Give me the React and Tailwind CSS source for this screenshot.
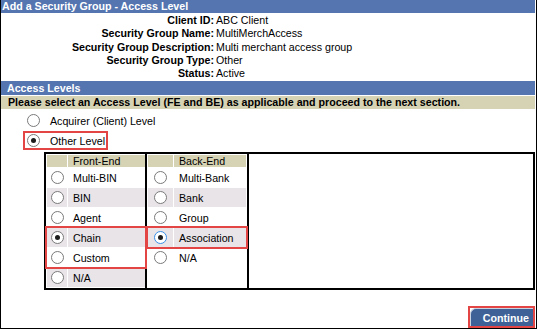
import React from 'react';

const info = [
  ['Client ID:', 'ABC Client'],
  ['Security Group Name:', 'MultiMerchAccess'],
  ['Security Group Description:', 'Multi merchant access group'],
  ['Security Group Type:', 'Other'],
  ['Status:', 'Active'],
];

const frontEnd = [
  { label: 'Multi-BIN' },
  { label: 'BIN' },
  { label: 'Agent' },
  { label: 'Chain', checked: true, group: 'a' },
  { label: 'Custom', group: 'a' },
  { label: 'N/A' },
];

const backEnd = [
  { label: 'Multi-Bank' },
  { label: 'Bank' },
  { label: 'Group' },
  { label: 'Association', checked: true, focus: true, group: 'b' },
  { label: 'N/A' },
];

const Radio = ({ checked, focus }) => (
  <span
    className={`flex h-[13px] w-[13px] items-center justify-center rounded-full border bg-white ${
      focus ? 'border-[#3a8ee6]' : 'border-[#7a7a7a]'
    }`}
  >
    {checked && <span className="h-[5px] w-[5px] rounded-full bg-[#1c1c1c]" />}
  </span>
);

const Row = ({ item, index, radioWidth }) => {
  const bg = index % 2 === 1 ? 'bg-[#e8e4e8]' : 'bg-white';
  return (
    <div className="flex h-[19px] gap-[1px]">
      <div className={`flex items-center justify-center ${radioWidth} ${bg}`}>
        <Radio checked={item.checked} focus={item.focus} />
      </div>
      <div className={`flex flex-1 items-center pl-[5px] ${bg}`}>{item.label}</div>
    </div>
  );
};

const Column = ({ title, items, radioWidth, className }) => {
  const rows = [];
  let i = 0;
  while (i < items.length) {
    const item = items[i];
    if (item.group) {
      const grouped = [];
      const start = i;
      while (i < items.length && items[i].group === item.group) {
        grouped.push(
          <Row key={i} item={items[i]} index={i} radioWidth={radioWidth} />
        );
        i++;
      }
      rows.push(
        <div
          key={`g${start}`}
          className="relative z-10 flex flex-col gap-[1px] outline-2 outline-[#e34444]"
        >
          {grouped}
        </div>
      );
    } else {
      rows.push(<Row key={i} item={item} index={i} radioWidth={radioWidth} />);
      i++;
    }
  }
  return (
    <div className={`flex flex-col gap-[1px] py-[1px] ${className}`}>
      <div className="flex h-[12px] gap-[1px] leading-[12px]">
        <div className={`${radioWidth} bg-[#d6d2b4]`} />
        <div className="flex-1 bg-[#d6d2b4] pl-[5px]">{title}</div>
      </div>
      {rows}
    </div>
  );
};

export default function App() {
  return (
    <div className="h-[329px] w-[537px] border-x border-b border-black bg-white pr-[1px] font-['Liberation_Sans',Arial,sans-serif] text-[10.67px] text-black">
      <div className="h-[13px] bg-[#5475b0] pl-[1px] font-bold leading-[13px] text-white">
        Add a Security Group - Access Level
      </div>

      <div className="h-[68px] pt-[1px]">
        {info.map(([label, value]) => (
          <div key={label} className="grid grid-cols-[213px_1fr] gap-[2px] leading-[13.25px]">
            <span className="text-right font-bold">{label}</span>
            <span>{value}</span>
          </div>
        ))}
      </div>

      <div className="h-[14px] bg-[#5475b0] pl-[6px] font-bold leading-[14px] text-white">
        Access Levels
      </div>
      <div className="mt-[1px] h-[13px] bg-[#d6d2b4] pl-[7px] font-bold leading-[13px]">
        Please select an Access Level (FE and BE) as applicable and proceed to the next section.
      </div>

      <div className="pt-[1px]">
        <div className="flex h-[21px] items-center gap-[10px] pl-[26px]">
          <Radio />
          <span>Acquirer (Client) Level</span>
        </div>
        <div className="ml-[24px] mt-[2px] flex h-[15px] w-[81px] items-center gap-[10px] pl-[2px] outline-2 outline-[#e34444]">
          <Radio checked />
          <span>Other Level</span>
        </div>
      </div>

      <div className="ml-[43px] mt-[4px] flex border-2 border-black">
        <Column title="Front-End" items={frontEnd} radioWidth="w-[20px]" className="w-[99px] pl-[1px]" />
        <div className="w-[2px] bg-black" />
        <Column title="Back-End" items={backEnd} radioWidth="w-[25px]" className="w-[100px] px-[1px]" />
        <div className="w-[2px] bg-black" />
        <div className="flex-1" />
      </div>

      <div className="mt-[16px] flex justify-end">
        <div className="border-2 border-[#e34444] bg-white">
          <button className="flex h-[18px] items-center rounded-tl-[6px] border-l border-t border-[#c8d2e0] bg-[#3e6298] pl-[12px] pr-[4px] text-[10.67px] font-bold text-white">
            Continue
          </button>
        </div>
      </div>
    </div>
  );
}
